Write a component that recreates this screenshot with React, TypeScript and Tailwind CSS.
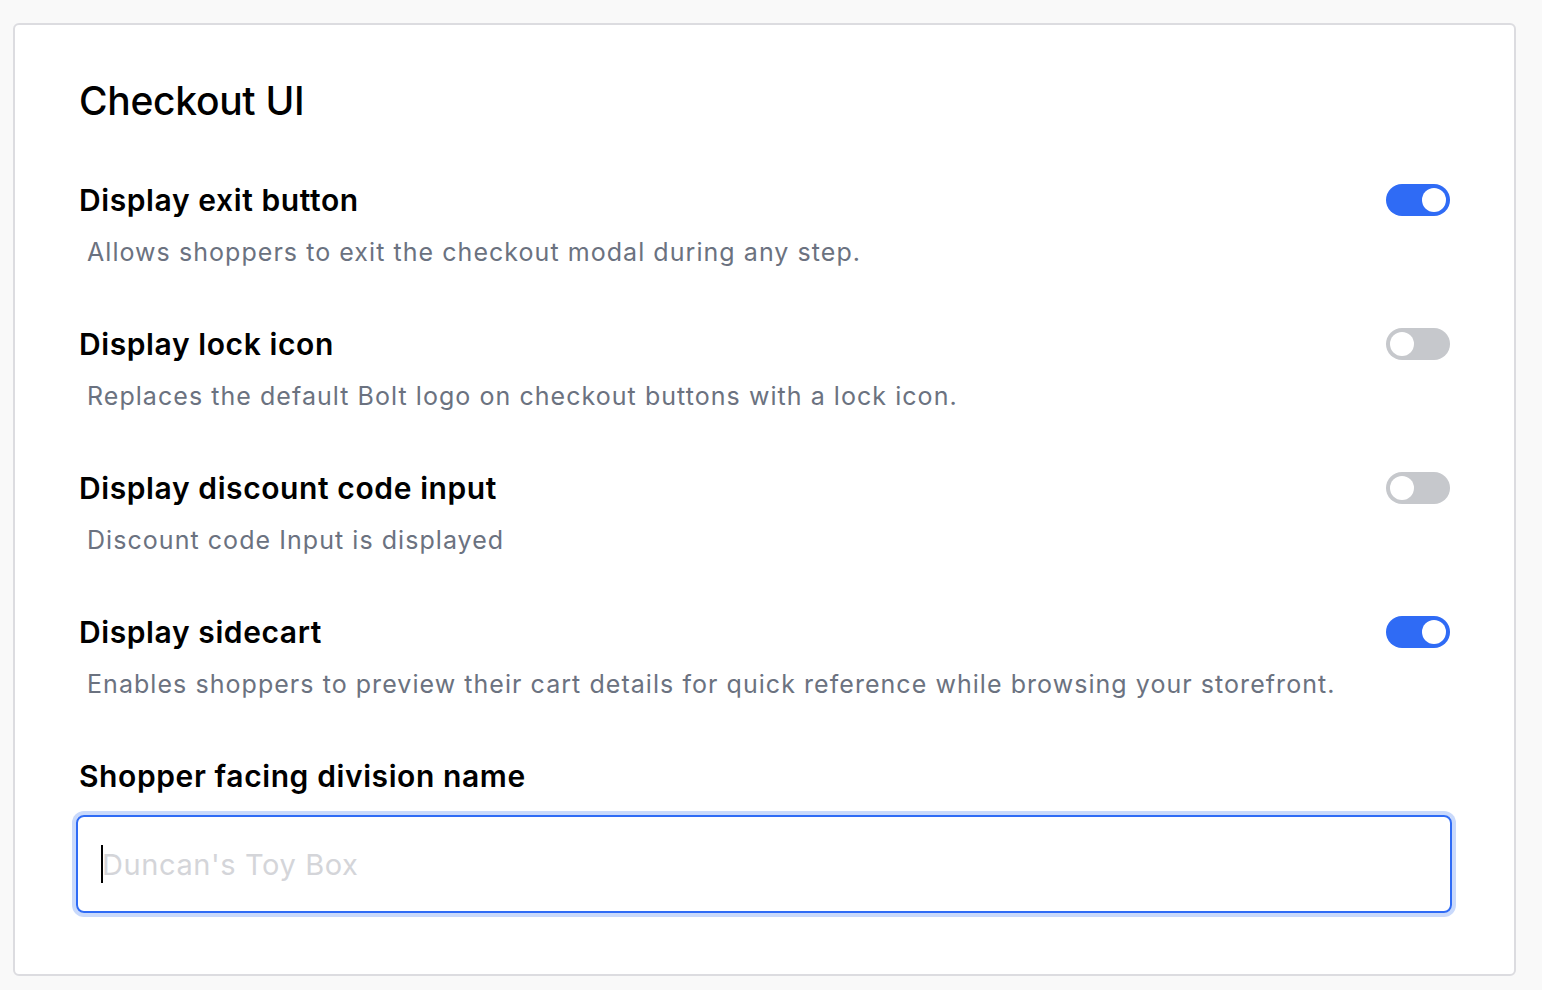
import React, { useState } from "react";

function Toggle({ on }: { on: boolean }) {
  return (
    <button
      type="button"
      className={
        "relative h-[32px] w-[64px] shrink-0 rounded-full " +
        (on ? "bg-[#2f6bf5]" : "bg-[#c6c8cc]")
      }
    >
      <span
        className={
          "absolute top-[4px] h-[24px] w-[24px] rounded-full bg-white " +
          (on ? "left-[36px]" : "left-[4px]")
        }
      />
    </button>
  );
}

const rows = [
  {
    title: "Display exit button",
    desc: "Allows shoppers to exit the checkout modal during any step.",
    on: true,
  },
  {
    title: "Display lock icon",
    desc: "Replaces the default Bolt logo on checkout buttons with a lock icon.",
    on: false,
  },
  {
    title: "Display discount code input",
    desc: "Discount code Input is displayed",
    on: false,
  },
  {
    title: "Display sidecart",
    desc: "Enables shoppers to preview their cart details for quick reference while browsing your storefront.",
    on: true,
  },
];

export default function App() {
  const [v, setV] = useState("");
  return (
    <div
      className="min-h-[990px] w-full bg-[#f9f9f9] pl-[13px] pr-[26px] pt-[23px]"
      style={{ fontFamily: "Inter, 'Noto Sans', sans-serif" }}
    >
      <div className="h-[953px] rounded-[6px] border-2 border-[#dcdce0] bg-white pl-[64px] pr-[64px] pt-[52px]">
        <h1 className="text-[39px] font-medium leading-[48px] tracking-[-0.3px] text-black">
          Checkout UI
        </h1>
        <div className="mt-[57px] flex flex-col gap-[59px]">
          {rows.map((r) => (
            <div key={r.title} className="flex items-start justify-between">
              <div>
                <div className="text-[30px] font-semibold leading-[36px] tracking-[0.6px] text-black">
                  {r.title}
                </div>
                <div className="mt-[19px] pl-[8px] text-[25px] leading-[30px] tracking-[1.05px] text-[#6b7280]">
                  {r.desc}
                </div>
              </div>
              <div className="pt-[2px]">
                <Toggle on={r.on} />
              </div>
            </div>
          ))}
        </div>
        <div className="mt-[59px] text-[30px] font-semibold leading-[36px] tracking-[0.6px] text-black">
          Shopper facing division name
        </div>
        <div className="relative -ml-[3px] -mr-[2px] mt-[21px]">
          <input
            value={v}
            onChange={(e) => setV(e.target.value)}
            placeholder="Duncan's Toy Box"
            className="h-[98px] w-full rounded-[8px] border-2 border-[#2f6bf5] px-[24px] text-[29px] tracking-[0.6px] text-black caret-black outline-none ring-4 ring-[#c9d9fb] placeholder:text-[#d4d5d9]"
          />
          {v === "" && (
            <span className="pointer-events-none absolute left-[25px] top-[30px] h-[38px] w-[2px] bg-black" />
          )}
        </div>
      </div>
    </div>
  );
}
